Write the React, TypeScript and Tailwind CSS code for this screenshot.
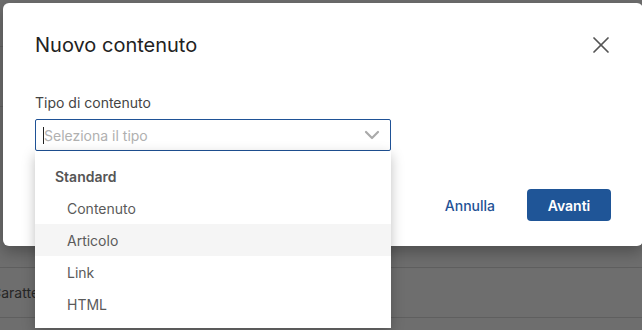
import { X, ChevronDown } from "lucide-react";

const options = ["Contenuto", "Articolo", "Link", "HTML"];

// pagina sotto (oscurata dall'overlay)
const BackgroundPage = () => (
  <div className="h-full w-full bg-[#6e6e6e]">
    <div className="h-[47px] border-b border-[#626262]" />
    <div className="h-[60px] border-b border-[#626262]" />
    <div className="h-[161px] border-b border-[#5f5f5f]" />
    <div className="flex h-[50px] items-center border-b border-[#5f5f5f]">
      <div className="w-[35px] overflow-hidden whitespace-nowrap">
        <span className="ml-[-9px] block text-[14px] text-[#262626]">Caratteristiche</span>
      </div>
    </div>
  </div>
);

const TypeDropdown = () => (
  <div className="absolute left-0 top-[32px] w-[356px] bg-white pt-[9px] pb-[8px] shadow-[0_4px_12px_rgba(0,0,0,0.25)]">
    <div className="flex h-[32px] items-center pl-[20px] text-[14px] font-semibold text-[#555]">Standard</div>
    {options.map((o) => (
      <div
        key={o}
        className={
          o === "Articolo"
            ? "flex h-[32px] items-center bg-[#f5f5f5] pl-[32px] text-[14px] text-[#5a5a5a]"
            : "flex h-[32px] items-center pl-[32px] text-[14px] text-[#5a5a5a]"
        }
      >
        {o}
      </div>
    ))}
  </div>
);

export default function App() {
  return (
    <div className="relative h-[330px] w-[642px] overflow-hidden font-['Inter','Liberation_Sans',sans-serif]">
      <BackgroundPage />

      {/* Modale */}
      <div className="absolute left-[3px] top-[3px] flex h-[243px] w-[640px] flex-col rounded-[6px] bg-white pl-[32px] pr-[32px] pt-[28px] shadow-[0_6px_16px_rgba(0,0,0,0.3)]">
        <div className="flex h-[28px] items-center justify-between">
          <h1 className="text-[20px] leading-[28px] text-[#222]">Nuovo contenuto</h1>
          <X className="mr-[-4px] h-[28px] w-[28px] text-[#555]" strokeWidth={1.5} />
        </div>

        <label className="mt-[34px] text-[14px] leading-[20px] text-[#444]">Tipo di contenuto</label>
        <div className="relative mt-[6px] w-[356px]">
          <div className="flex h-[32px] items-center rounded-[2px] border border-[#1f5296] pl-[7px] pr-[6px]">
            <span className="h-[17px] w-px bg-[#222]" />
            <span className="flex-1 text-[14px] text-[#b0b0b0]">Seleziona il tipo</span>
            <ChevronDown className="h-[24px] w-[24px] text-[#aaa]" strokeWidth={2.2} />
          </div>
          <TypeDropdown />
        </div>

        <div className="mt-[38px] flex items-center justify-end gap-[32px]">
          <button className="text-[14px] font-medium text-[#1f5296]">Annulla</button>
          <button className="h-[32px] w-[84px] rounded-[4px] bg-[#1f5597] text-[14px] font-semibold text-white">
            Avanti
          </button>
        </div>
      </div>
    </div>
  );
}
